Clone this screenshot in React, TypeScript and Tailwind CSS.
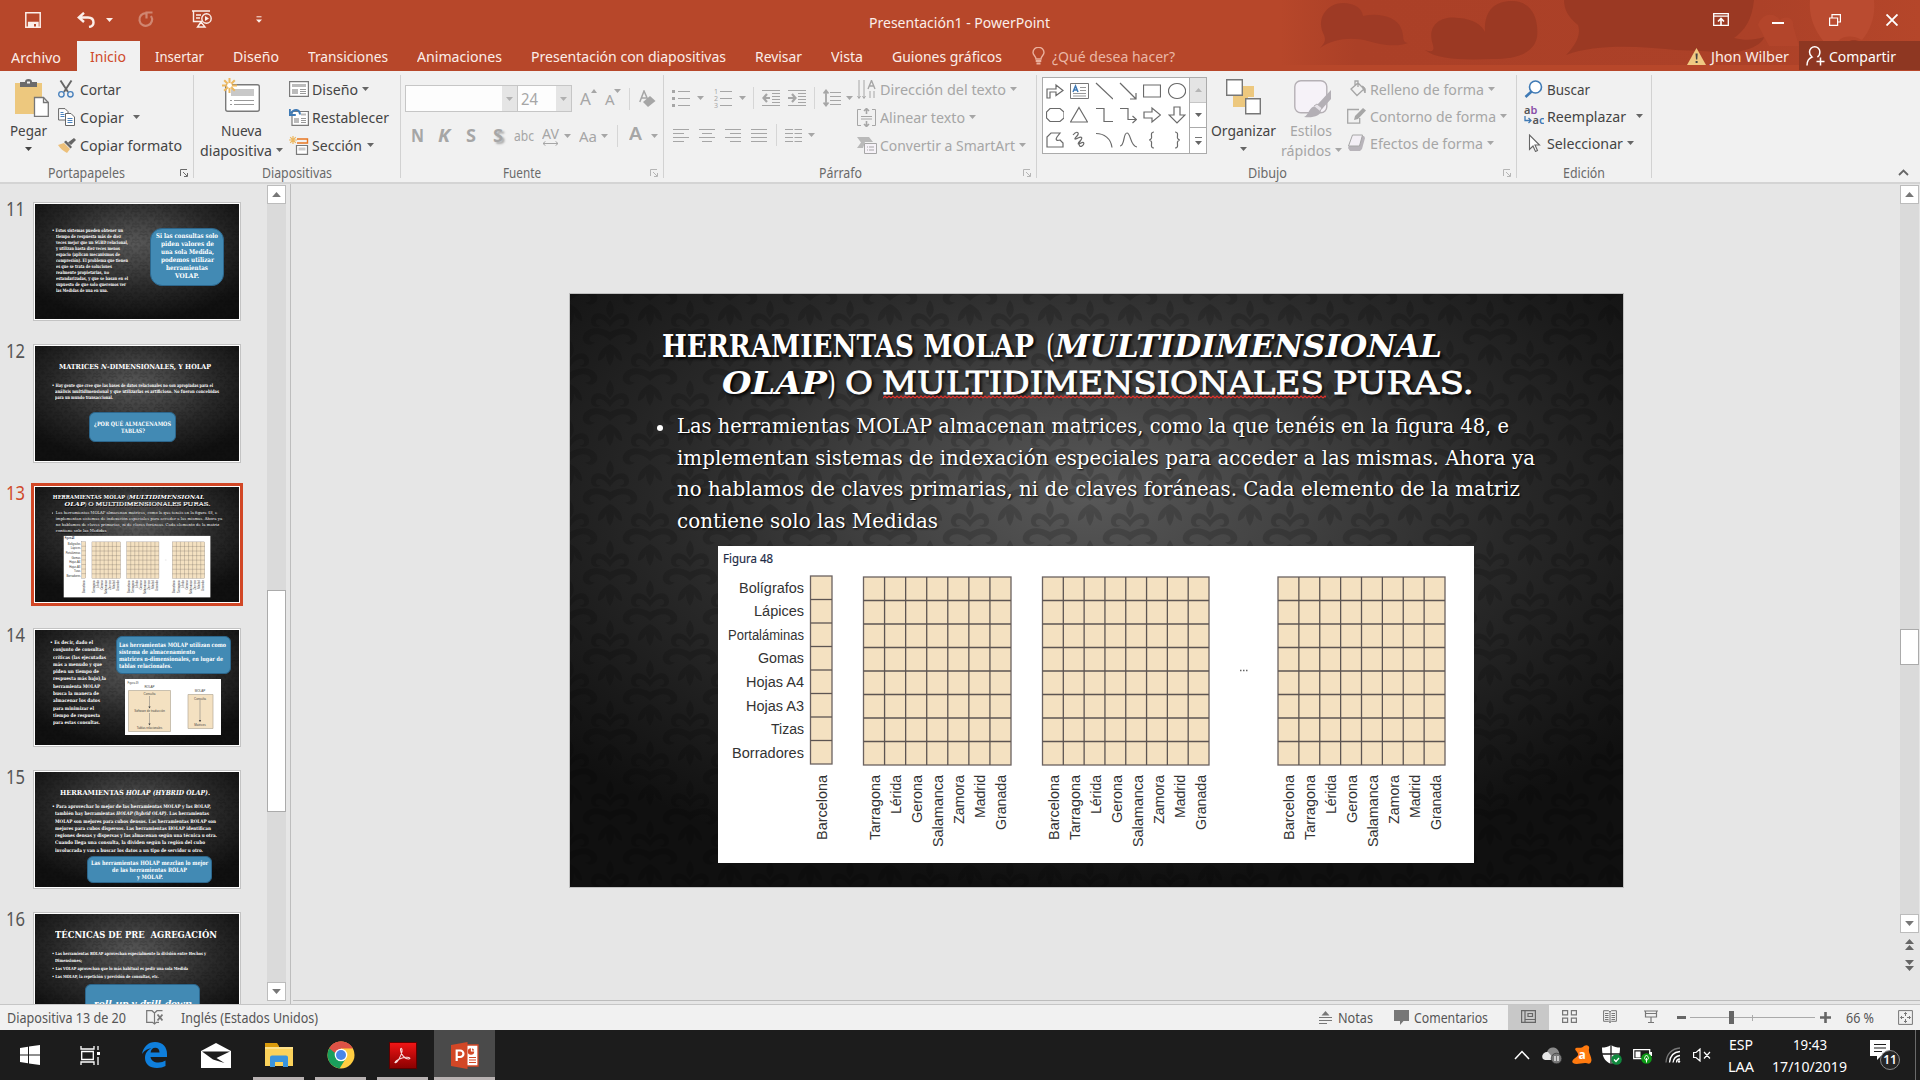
import React, { useLayoutEffect, useRef } from "react";

type Kids = { className?: string; children?: React.ReactNode };

/* Single line of text stretched or condensed to the width of its box. */
function Fit({ className = "", children }: Kids) {
  const outer = useRef<HTMLSpanElement>(null);
  const inner = useRef<HTMLSpanElement>(null);
  useLayoutEffect(() => {
    const o = outer.current;
    const i = inner.current;
    if (!o || !i) return;
    i.style.transform = "none";
    const ow = o.getBoundingClientRect().width;
    const iw = i.getBoundingClientRect().width;
    if (iw > 0) i.style.transform = `scaleX(${ow / iw})`;
  });
  return (
    <span ref={outer} className={`block shrink-0 ${className}`}>
      <span ref={inner} className="inline-block origin-left whitespace-pre">
        {children}
      </span>
    </span>
  );
}

function Svg({ className = "", vb, children }: Kids & { vb: string }) {
  return (
    <svg viewBox={vb} fill="none" stroke="currentColor" className={`block shrink-0 ${className}`}>
      {children}
    </svg>
  );
}

function Caret({ className = "" }: { className?: string }) {
  return (
    <svg viewBox="0 0 7 4" className={`block h-[4px] w-[7px] shrink-0 ${className}`}>
      <path d="M0 0h7L3.5 4z" fill="currentColor" />
    </svg>
  );
}

function Launcher({ className = "" }: { className?: string }) {
  return (
    <Svg vb="0 0 8 8" className={`h-[8px] w-[8px] ${className}`}>
      <path d="M.5 7V.5H7M3 3l4 4M7.500 4v3.500H4" />
    </Svg>
  );
}

const Sep = () => <div className="mt-[4px] h-[103px] w-px shrink-0 bg-[#d2d2d2]" />;

/* ------------------------------------------------------------------ Title bar */

function Header() {
  return (
    <header className="relative flex h-[71px] w-full shrink-0 flex-col overflow-hidden bg-[#b7472a] text-[15px] leading-[20px] text-[#fbeee9]">
      <svg viewBox="0 0 640 71" className="absolute top-0 right-0 h-[71px] w-[640px]">
        <defs>
          <linearGradient id="hd" x1="0" x2="1" y1="0" y2="0">
            <stop offset="0" stopColor="#b7472a" />
            <stop offset=".12" stopColor="#ab4027" />
            <stop offset=".75" stopColor="#ac4128" />
            <stop offset="1" stopColor="#b5462a" />
          </linearGradient>
        </defs>
        <path d="M0 0h640v65H0z" fill="url(#hd)" />
        <path d="M40 48c6-6 6-9 3-15C36 16 49 3 63 3c11 0 19 5 20 13 16-4 34 1 38 12 4 9 0 14 7 15-12 5-30 1-40-2-15-4-34-3-48 7z" fill="#9e3a25" />
        <path d="M145 50c9 3 9 0 8-5-7-20 8-30 26-27 14 1 23 7 26 14C204 11 214 1 232 1c21 0 27 20 25 36-3 17-22 22-45 22-26 1-55 1-67-9z" fill="#9b3923" />
        <path d="M284 0h190c-2 20-9 30-20 38 12 3 20 2 30-1-2 8-15 14-40 17-16-4-30-3-48-4-40-4-80-6-110 5 14-14 14-24 12-30-10-8-14-16-14-25z" fill="#9b3923" />
        <path d="M478 25c4-12 16-13 22-5 6-5 14-2 13 5l6 21h-30z" fill="#b3452b" />
        <path d="M530 0h64c2 18-5 32-12 40-14-8-28-2-28 12-14-12-26-30-24-52z" fill="#ba4b30" />
        <path d="M566 48c0-8 8-10 14-6l4 6z" fill="#9b3923" />
      </svg>

      <div className="relative flex h-[41px] items-center pb-[2px]">
        <Svg vb="0 0 16 16" className="ml-[25px] h-[16px] w-[16px]">
          <path d="M.8.8h14.400v14.400H.8z" strokeWidth="1.500" />
          <path d="M3 10h10v6h-2v-4H9v4H3zM0 9h16" fill="currentColor" stroke="none" />
          <path d="M3 10.500h10V15M3.600 10v5" strokeWidth="1.400" />
        </Svg>
        <Svg vb="0 0 18 16" className="ml-[36px] h-[16px] w-[18px]">
          <path d="M7 .8 1.800 5.500 7 10M2.500 5.500H11c4 0 5.500 2.500 5.500 5 0 2.200-1.500 4-4.500 4.500" strokeWidth="2.400" />
        </Svg>
        <Caret className="ml-[11px] h-[3px] w-[6px]" />
        <Svg vb="0 0 17 17" className="ml-[24px] h-[17px] w-[17px] text-[#d08671]">
          <path d="M9 2.200A6.300 6.300 0 1 0 14 5M9.500 7.500V1.500h6" strokeWidth="2.200" />
        </Svg>
        <Svg vb="0 0 20 19" className="ml-[38px] h-[19px] w-[20px]">
          <path d="M0 1h18M1.500 1.500v10H10M4 5h5M4 8h4M9 12l-3.500 5h7.500z" strokeWidth="1.400" />
          <circle cx="14.500" cy="8.500" r="4.700" strokeWidth="1.400" />
          <path d="m13 6 4 2.500-4 2.500z" fill="currentColor" stroke="none" />
        </Svg>
        <Svg vb="0 0 6 7" className="ml-[44px] h-[7px] w-[6px]">
          <path d="M.5.8h5" />
          <path d="M0 3.500h6L3 6.800z" fill="currentColor" stroke="none" />
        </Svg>
        <Fit className="mt-[4px] ml-[607px] w-[181px]">Presentación1 - PowerPoint</Fit>
        <div className="ml-[663px] flex items-center text-white">
          <Svg vb="0 0 16 13" className="h-[13px] w-[16px]">
            <path d="M.7.700h14.600v11.600H.7zM.7 3.200h14.600" strokeWidth="1.300" />
            <path d="M8 12V6M5 8.500 8 5.500l3 3" strokeWidth="1.600" />
          </Svg>
          <div className="mt-[6px] ml-[43px] h-[2px] w-[12px] bg-white" />
          <Svg vb="0 0 12 12" className="ml-[45px] h-[12px] w-[12px]">
            <path d="M.6 4h8v7.400h-8zM3 3.500V.6h8.400V8H9" strokeWidth="1.200" />
          </Svg>
          <Svg vb="0 0 12 12" className="ml-[45px] h-[12px] w-[12px]">
            <path d="m.5.500 11 11m0-11-11 11" strokeWidth="1.900" />
          </Svg>
        </div>
      </div>

      <nav className="relative flex h-[30px] items-center">
        <Fit className="mt-[2px] ml-[11px] w-[50px]">Archivo</Fit>
        <div className="ml-[16px] flex h-[30px] w-[63px] items-center bg-[#f1f1f1] pl-[13px] text-[#cf4a2a]">
          <Fit className="w-[36px]">Inicio</Fit>
        </div>
        <Fit className="ml-[15px] w-[49px]">Insertar</Fit>
        <Fit className="ml-[29px] w-[46px]">Diseño</Fit>
        <Fit className="ml-[29px] w-[80px]">Transiciones</Fit>
        <Fit className="ml-[29px] w-[85px]">Animaciones</Fit>
        <Fit className="ml-[29px] w-[195px]">Presentación con diapositivas</Fit>
        <Fit className="ml-[29px] w-[47px]">Revisar</Fit>
        <Fit className="ml-[29px] w-[32px]">Vista</Fit>
        <Fit className="ml-[29px] w-[110px]">Guiones gráficos</Fit>
        <Svg vb="0 0 13 18" className="ml-[30px] h-[18px] w-[13px] text-[#eab09d]">
          <path d="M4 12c0-3-3-3.500-3-6.500a5.500 5.200 0 0 1 11 0C12 8.500 9 9 9 12z" strokeWidth="1.400" />
          <path d="M3.700 14h5.600M4.500 16.500h4" strokeWidth="1.800" />
        </Svg>
        <Fit className="ml-[7px] w-[123px] text-[#eab7a6]">¿Qué desea hacer?</Fit>
        <svg viewBox="0 0 19 17" className="ml-[512px] block h-[17px] w-[19px] shrink-0">
          <path d="M9.500 0 19 17H0z" fill="#f0c982" />
          <path d="M8.500 5.500h2.200l-.4 6H9zM8.600 13h2v2h-2z" fill="#444" />
        </svg>
        <Fit className="ml-[5px] w-[78px]">Jhon Wilber</Fit>
        <div className="ml-[10px] flex h-[29px] w-[121px] items-center self-start bg-[#8e3722] pl-[7px] text-white">
          <Svg vb="0 0 19 20" className="h-[20px] w-[19px]">
            <path d="M1 19.500c0-5 2.500-7.500 5-8.500C4 9.500 3.500 7.500 3.500 6a5.200 5.200 0 0 1 10.400 0c0 2-.9 4-2.500 5M14.500 11.500v8M10.500 15.500h8" strokeWidth="1.500" />
          </Svg>
          <Fit className="ml-[4px] w-[67px]">Compartir</Fit>
        </div>
      </nav>
    </header>
  );
}

/* --------------------------------------------------------------------- Ribbon */

function Group({ className = "", children }: Kids) {
  return <section className={`flex h-[111px] shrink-0 flex-col ${className}`}>{children}</section>;
}
const GroupBody = ({ children }: Kids) => <div className="flex h-[92px]">{children}</div>;
const GroupLabel = ({ children }: Kids) => (
  <div className="flex h-[19px] items-center text-[14px] leading-[18px] text-[#6a6a6a]">{children}</div>
);
const Row = ({ className = "", children }: Kids) => <div className={`flex h-[28px] items-center ${className}`}>{children}</div>;

function Clipboard() {
  return (
    <Group className="w-[193px]">
      <GroupBody>
        <div className="flex w-[58px] flex-col pt-[8px]">
          <svg viewBox="0 0 34 38" className="ml-[15px] block h-[38px] w-[34px]">
            <path d="M0 4h27v31H0z" fill="#edc87e" />
            <path d="M5 3h5a3.500 3 0 0 1 7 0h5v5H5z" fill="#6b6b6b" />
            <path d="M12 2.500h3v2h-3z" fill="#f1f1f1" />
            <path d="M19.500 18.500h9l4.800 5v14H19.500z" fill="#fff" stroke="#777" strokeWidth="1.300" />
            <path d="M28.500 18.500v5h5" fill="none" stroke="#777" strokeWidth="1.300" />
          </svg>
          <Fit className="mt-[3px] ml-[10px] w-[37px]">Pegar</Fit>
          <Caret className="mt-[7px] ml-[25px]" />
        </div>
        <div className="pt-[4px]">
          <Row>
            <Svg vb="0 0 16 18" className="h-[18px] w-[16px]">
              <path d="M2.500.5 10 12M13.500.5 6 12" stroke="#666" strokeWidth="1.900" />
              <circle cx="3.400" cy="14.300" r="2.700" stroke="#4a82bd" strokeWidth="1.400" />
              <circle cx="12.400" cy="14.300" r="2.700" stroke="#4a82bd" strokeWidth="1.400" />
            </Svg>
            <Fit className="ml-[6px] w-[41px]">Cortar</Fit>
          </Row>
          <Row>
            <Svg vb="0 0 17 18" className="h-[18px] w-[17px]">
              <path d="M.6.600h6.400l3 3V12H.6z" fill="#fff" stroke="#666" />
              <path d="M7.500 5.500h5.500l3.500 3.500v8.500h-9z" fill="#fff" stroke="#666" />
              <path d="M2.500 4.500h3M2.500 6.500h4M2.500 8.500h4M9.500 10.500h5M9.500 12.500h5M9.500 14.500h5" stroke="#4a82bd" />
            </Svg>
            <Fit className="ml-[5px] w-[44px]">Copiar</Fit>
            <Caret className="ml-[9px] text-[#666]" />
          </Row>
          <Row>
            <svg viewBox="0 0 18 15" className="block h-[15px] w-[18px]">
              <path d="m0 7 6-2 6 6-3 4C5 13 2 10 0 7z" fill="#edc07a" />
              <path d="m6 4 2-1.500L14 9l-1.500 1.500zM10 4.500 16 0l2 2-5 5z" fill="#666" />
            </svg>
            <Fit className="ml-[4px] w-[102px]">Copiar formato</Fit>
          </Row>
        </div>
      </GroupBody>
      <GroupLabel>
        <Fit className="ml-[48px] w-[77px]">Portapapeles</Fit>
        <Launcher className="ml-[55px]" />
      </GroupLabel>
    </Group>
  );
}

function Slides() {
  return (
    <Group className="w-[206px]">
      <GroupBody>
        <div className="flex w-[95px] flex-col pt-[7px]">
          <svg viewBox="0 0 38 34" className="ml-[28px] block h-[34px] w-[38px]">
            <rect x="3.700" y="6.700" width="33.600" height="26.600" rx="2" fill="#fff" stroke="#7a7a7a" strokeWidth="1.400" />
            <path d="M9 11h23v7H9z" fill="#c8c8c8" />
            <path d="M8 22.500h2m2 0h20M8 26.500h2m2 0h20" stroke="#999" />
            <path d="M7.500 0v15M0 7.500h15M2.200 2.200l10.600 10.600M12.800 2.200 2.200 12.800" stroke="#edb85f" strokeWidth="2" />
            <circle cx="7.500" cy="7.500" r="2.400" fill="#fff" />
          </svg>
          <Fit className="mt-[8px] ml-[27px] w-[41px]">Nueva</Fit>
          <div className="flex items-center">
            <Fit className="ml-[6px] w-[72px]">diapositiva</Fit>
            <Caret className="ml-[4px] text-[#666]" />
          </div>
        </div>
        <div className="pt-[4px]">
          <Row>
            <Svg vb="0 0 20 16" className="h-[16px] w-[20px]">
              <path d="M.6.600h18.800v14.800H.6z" fill="#fff" stroke="#7a7a7a" strokeWidth="1.200" />
              <path d="M3 3h14v3H3zM3 8h6v5H3z" fill="#bbb" stroke="none" />
              <path d="M11 8.500h6M11 10.500h6M11 12.500h6" stroke="#999" />
            </Svg>
            <Fit className="ml-[3px] w-[46px]">Diseño</Fit>
            <Caret className="ml-[4px] text-[#666]" />
          </Row>
          <Row>
            <Svg vb="0 0 20 18" className="h-[18px] w-[20px]">
              <path d="M3 3.500h16.400v13.900H3z" fill="#fff" stroke="#7a7a7a" strokeWidth="1.200" />
              <path d="M12 5.500h5v2h-5zM5 10h5v5H5z" fill="#bbb" stroke="none" />
              <path d="M12 10.500h5M12 12.500h5M12 14.500h5" stroke="#999" />
              <path d="M2 5.500C5 .5 10.500 1 11 6.500M.8 1v6h6" stroke="#3f7ab5" strokeWidth="2" />
            </Svg>
            <Fit className="ml-[3px] w-[77px]">Restablecer</Fit>
          </Row>
          <Row>
            <Svg vb="0 0 20 19" className="h-[19px] w-[20px]">
              <path d="M8 3h10.500v4H8" stroke="#e87722" strokeWidth="1.400" />
              <path d="M7.500 9.500h11v8.900h-11z" fill="#fff" stroke="#7a7a7a" strokeWidth="1.200" />
              <path d="M9.500 11.500h7v3h-7z" fill="#ccc" stroke="none" />
              <path d="M4 0v8M0 4h8M1.200 1.200l5.600 5.600M6.800 1.200 1.200 6.800" stroke="#edb85f" strokeWidth="1.200" />
            </Svg>
            <Fit className="ml-[3px] w-[50px]">Sección</Fit>
            <Caret className="ml-[5px] text-[#666]" />
          </Row>
        </div>
      </GroupBody>
      <GroupLabel>
        <Fit className="ml-[68px] w-[70px]">Diapositivas</Fit>
      </GroupLabel>
    </Group>
  );
}

function FontGroup() {
  return (
    <Group className="w-[262px] text-[#a6a6a6]">
      <div className="flex h-[92px] flex-col">
        <div className="mt-[14px] flex h-[27px] items-center">
          <div className="ml-[4px] flex h-[27px] w-[113px] justify-end border border-[#c6c6c6] bg-[#fdfdfd]">
            <div className="flex w-[15px] items-center justify-center bg-[#e5e5e5]">
              <Caret className="text-[#b0b0b0]" />
            </div>
          </div>
          <div className="flex h-[27px] w-[54px] items-center justify-between border border-l-0 border-[#c6c6c6] bg-[#fdfdfd] pl-[3px]">
            <Fit className="w-[17px] text-[16px]">24</Fit>
            <div className="flex h-full w-[15px] items-center justify-center bg-[#e5e5e5]">
              <Caret className="text-[#b0b0b0]" />
            </div>
          </div>
          <span className="ml-[8px] text-[17px]">A</span>
          <Svg vb="0 0 6 4" className="mb-[16px] h-[4px] w-[6px]"><path d="M0 4 3 0l3 4z" fill="currentColor" stroke="none" /></Svg>
          <span className="ml-[8px] text-[15px]">A</span>
          <Caret className="mb-[15px] w-[6px]" />
          <div className="ml-[8px] h-[22px] w-px bg-[#d6d6d6]" />
          <Svg vb="0 0 17 18" className="ml-[9px] h-[18px] w-[17px]">
            <path d="M.8 12 5 1l4 9M2.500 8h5" strokeWidth="1.500" />
            <path d="m9 17-5-5 7-6 5.500 5z" fill="currentColor" stroke="none" />
          </Svg>
        </div>
        <div className="mt-[12px] flex h-[24px] items-center text-[17px] leading-[22px]">
          <Fit className="ml-[10px] w-[13px] font-bold">N</Fit>
          <Fit className="ml-[14px] w-[12px] font-bold italic">K</Fit>
          <Fit className="ml-[16px] w-[10px] font-bold underline underline-offset-2">S</Fit>
          <Fit className="ml-[17px] w-[10px] font-bold [text-shadow:2px_2px_2px_#aaa]">S</Fit>
          <Fit className="ml-[11px] w-[20px] text-[14px] line-through">abc</Fit>
          <div className="ml-[8px] flex flex-col">
            <Fit className="w-[17px] text-[14px] leading-[15px]">AV</Fit>
            <Svg vb="0 0 17 5" className="h-[5px] w-[17px]"><path d="M1 2.500h15M3.500.3 1 2.500l2.500 2.200M13.500.300 16 2.500l-2.500 2.200" /></Svg>
          </div>
          <Caret className="ml-[5px]" />
          <Fit className="ml-[8px] w-[18px] text-[15px]">Aa</Fit>
          <Caret className="ml-[4px]" />
          <div className="ml-[9px] h-[22px] w-px bg-[#d6d6d6]" />
          <Fit className="mb-[4px] ml-[11px] w-[13px] font-semibold">A</Fit>
          <Caret className="ml-[9px]" />
        </div>
      </div>
      <GroupLabel>
        <Fit className="ml-[102px] w-[38px]">Fuente</Fit>
        <Launcher className="ml-[109px] text-[#b5b5b5]" />
      </GroupLabel>
    </Group>
  );
}

function Paragraph() {
  return (
    <Group className="w-[372px] text-[#a6a6a6]">
      <GroupBody>
        <div className="flex w-[193px] flex-col">
          <div className="mt-[16px] flex h-[22px] items-center">
            <Svg vb="0 0 18 17" className="ml-[8px] h-[17px] w-[18px]">
              <path d="M0 1.500h3M0 8.500h3M0 15.500h3" strokeWidth="3" /><path d="M6 1.500h12M6 8.500h12M6 15.500h12" />
            </Svg>
            <Caret className="ml-[7px]" />
            <svg viewBox="0 0 18 20" className="ml-[10px] block h-[20px] w-[18px]">
              <path d="M6 3.500h12M6 10.500h12M6 17.500h12" stroke="currentColor" />
              <text x="0" y="6" fontSize="7" fill="currentColor">1</text>
              <text x="0" y="13" fontSize="7" fill="currentColor">2</text>
              <text x="0" y="20" fontSize="7" fill="currentColor">3</text>
            </svg>
            <Caret className="ml-[7px]" />
            <div className="ml-[7px] h-[22px] w-px bg-[#d6d6d6]" />
            <Svg vb="0 0 18 16" className="ml-[8px] h-[16px] w-[18px]">
              <path d="M0 .5h18M10 3.500h8M10 6.500h8M10 9.500h8M10 12.500h8M0 15.500h18" />
              <path d="M8 8H2M5 4 1.500 8 5 12" strokeWidth="2.200" />
            </Svg>
            <Svg vb="0 0 18 16" className="ml-[8px] h-[16px] w-[18px]">
              <path d="M0 .5h18M10 3.500h8M10 6.500h8M10 9.500h8M10 12.500h8M0 15.500h18" />
              <path d="M0 8h6M4 4l3.500 4L4 12" strokeWidth="2.200" />
            </Svg>
            <div className="ml-[8px] h-[22px] w-px bg-[#d6d6d6]" />
            <Svg vb="0 0 18 18" className="ml-[8px] h-[18px] w-[18px]">
              <path d="M7 3.500h11M7 7.500h11M7 11.500h11M7 15.500h11" />
              <path d="M3 1.500V17M.5 4.500 3 1.500l2.500 3M.5 13.500 3 16.500l2.500-3" strokeWidth="1.800" />
            </Svg>
            <Caret className="ml-[5px]" />
          </div>
          <div className="mt-[15px] flex h-[22px] items-center">
            <Svg vb="0 0 16 13" className="ml-[9px] h-[13px] w-[16px]"><path d="M0 .5h16M0 4.500h11M0 8.500h16M0 12.500h11" /></Svg>
            <Svg vb="0 0 16 13" className="ml-[10px] h-[13px] w-[16px]"><path d="M0 .5h16M3 4.500h10M0 8.500h16M3 12.500h10" /></Svg>
            <Svg vb="0 0 16 13" className="ml-[10px] h-[13px] w-[16px]"><path d="M0 .5h16M5 4.500h11M0 8.500h16M5 12.500h11" /></Svg>
            <Svg vb="0 0 16 13" className="ml-[10px] h-[13px] w-[16px]"><path d="M0 .5h16M0 4.500h16M0 8.500h16M0 12.500h16" /></Svg>
            <div className="ml-[9px] h-[22px] w-px bg-[#d6d6d6]" />
            <Svg vb="0 0 17 13" className="ml-[8px] h-[13px] w-[17px]"><path d="M0 .5h8M0 4.500h8M0 8.500h8M0 12.500h8M9.500.5h7.500M9.500 4.500h7.500M9.500 8.500h7.500M9.500 12.500h7.500" /></Svg>
            <Caret className="ml-[6px]" />
          </div>
        </div>
        <div className="pt-[4px]">
          <Row>
            <Svg vb="0 0 19 19" className="h-[19px] w-[19px]">
              <path d="M2 0v18M7 0v18M.500 16 2 18.500 3.500 16M5.500 16 7 18.500 8.500 16M13 11v7M17 11v7M11 0" />
              <path d="M11 9 14.500.500 18 9M12 6h5" strokeWidth="1.400" />
            </Svg>
            <Fit className="ml-[4px] w-[126px]">Dirección del texto</Fit>
            <Caret className="ml-[4px]" />
          </Row>
          <Row>
            <Svg vb="0 0 19 19" className="h-[19px] w-[19px]">
              <path d="M4 1.500H.5v16H4M15 1.500h3.500v16H15M4 8.500h11M4 11h11" />
              <path d="M9.500 0v6M9.500 13v6M7 3 9.500.500 12 3M7 16l2.500 2.500L12 16" strokeWidth="1.600" />
            </Svg>
            <Fit className="ml-[4px] w-[85px]">Alinear texto</Fit>
            <Caret className="ml-[4px]" />
          </Row>
          <Row>
            <Svg vb="0 0 20 17" className="h-[17px] w-[20px]">
              <path d="M0 0h12l4 5H8l-2 6H0l4-5.500z" fill="#b9b9b9" stroke="none" />
              <path d="M7.500 6.500h12v10h-12z" fill="#f6f2f8" /><path d="M10 10h1m1 0h5M10 13h1m1 0h5" />
            </Svg>
            <Fit className="ml-[3px] w-[135px]">Convertir a SmartArt</Fit>
            <Caret className="ml-[4px]" />
          </Row>
        </div>
      </GroupBody>
      <GroupLabel>
        <Fit className="ml-[155px] w-[43px]">Párrafo</Fit>
        <Launcher className="ml-[161px] text-[#b5b5b5]" />
      </GroupLabel>
    </Group>
  );
}

const shapePaths = [
  "M1 16V7h9V3l7 5.500-7 5V10H4v6z",
  "",
  "M1 1l17 16",
  "M1 1l16 16M17 11v6h-6",
  "M.5 3h17v12H.5z",
  "M9 1.500a8.500 7.500 0 1 0 .1 0z",
  "M4 2.500h10l4 3.500v6l-4 3.500H4L.500 12V6z",
  "M9 1.500 17.500 16H.5z",
  "M1 2.500h8v13h9",
  "M1 2.500h8v11h8M13.500 10l4 3.500-4 3.500",
  "M1 6h8V2l8.500 7L9 16v-4H1z",
  "M6 1h6v8h5l-8 8-8-8h5z",
  "M1 16V6l4-4h9l-3 4c-2 3 0 4 3 3l3 3v4z",
  "M3 4c4-5 7-2 4 1S4 9 8 7s5 0 2 3-2 4 1 2 4 1 1 3-4-3-1-6",
  "M1 2.500c8 0 15 5 16 14",
  "M1 15C6 15 4 2 8 2s3 13 10 14",
  "M11 1C7 1 9 5 8.500 7 8 8.500 7 9 6 9c1 0 2 .5 2.500 2 .5 2-1.500 6 2.500 6",
  "M7 1c4 0 2 4 2.500 6 .5 1.500 1.500 2 2.500 2-1 0-2 .5-2.500 2-.5 2 1.500 6-2.500 6",
];

function Drawing() {
  return (
    <Group className="w-[479px] text-[#a6a6a6]">
      <GroupBody>
        <div className="mt-[6px] ml-[5px] flex h-[77px] w-[165px] border border-[#ababab] bg-white">
          <div className="grid w-[146px] grid-cols-6 grid-rows-3 place-items-center py-px text-[#6a6a6a]">
            {shapePaths.map((d, i) =>
              i === 1 ? (
                <svg key={i} viewBox="0 0 19 16" className="block h-[16px] w-[19px]">
                  <path d="M.5.500h18v15H.5z" fill="#fff" stroke="#777" />
                  <path d="m3 9 2.500-6L8 9M4 7h3" fill="none" stroke="#3f7ab5" strokeWidth="1.500" />
                  <path d="M10 4.500h6M10 7.500h6M3 10.500h13M3 13h13" stroke="#999" />
                </svg>
              ) : (
                <Svg key={i} vb="0 0 18 18" className="h-[18px] w-[18px]">
                  <path d={d} strokeWidth="1.200" />
                </Svg>
              ),
            )}
          </div>
          <div className="flex w-[17px] flex-col border-l border-[#ababab]">
            <div className="flex h-[25px] items-center justify-center border-b border-[#c6c6c6] bg-[#e4e4e4]">
              <Caret className="w-[5px] rotate-180 text-[#b5b5b5]" />
            </div>
            <div className="flex h-[25px] items-center justify-center border-b border-[#ababab]">
              <Caret className="h-[3px] w-[5px] text-[#666]" />
            </div>
            <div className="flex h-[25px] flex-col items-center justify-center gap-[3px]">
              <div className="h-px w-[7px] bg-[#777]" />
              <Caret className="w-[6px] text-[#666]" />
            </div>
          </div>
        </div>
        <div className="flex w-[70px] flex-col pt-[8px] text-[#444]">
          <svg viewBox="0 0 35 36" className="ml-[19px] block h-[36px] w-[35px]">
            <path d="M17 7h11v11h-6v10H7V17h10z" fill="#edc87e" />
            <path d="M.7.700h15.600v15.600H.7zM19.700 19.700h14.600v15H19.700z" fill="#fff" stroke="#777" strokeWidth="1.400" />
          </svg>
          <Fit className="mt-[5px] ml-[4px] w-[65px]">Organizar</Fit>
          <Caret className="mt-[7px] ml-[33px] text-[#666]" />
        </div>
        <div className="flex w-[69px] flex-col pt-[9px]">
          <svg viewBox="0 0 38 38" className="ml-[17px] block h-[38px] w-[38px]">
            <rect x=".8" y=".8" width="32" height="32" rx="6" fill="#f6f2f8" stroke="#b5b0b5" strokeWidth="1.400" />
            <path d="M37 10v9L28 29l-5-4z" fill="#b3afb5" />
            <path d="m22 26 5 4c0 6-8 8-17 7 5-2 5-11 12-11z" fill="#b3afb5" />
            <path d="m20 26 3-2 5 4-2 3" fill="#e6e2e8" stroke="#b5b0b5" />
          </svg>
          <Fit className="mt-[2px] ml-[13px] w-[42px]">Estilos</Fit>
          <div className="flex items-center">
            <Fit className="ml-[4px] w-[50px]">rápidos</Fit>
            <Caret className="ml-[4px]" />
          </div>
        </div>
        <div className="pt-[4px] pl-px">
          <Row className="h-[27px]!">
            <Svg vb="0 0 19 17" className="h-[17px] w-[19px]">
              <path d="m4 9 7-6 6 6-7 6.500zM8 6V1h3v6" strokeWidth="1.300" /><path d="M15 6c3 1 4 3 3 7z" fill="currentColor" />
            </Svg>
            <Fit className="ml-[4px] w-[114px]">Relleno de forma</Fit>
            <Caret className="ml-[4px]" />
          </Row>
          <Row className="h-[27px]!">
            <Svg vb="0 0 19 16" className="h-[16px] w-[19px]">
              <path d="M12 1.500H.7v13.600h12V10" strokeWidth="1.300" /><path d="m7 12 1-4L16 0l3 2.500L11 11z" fill="currentColor" stroke="none" />
            </Svg>
            <Fit className="ml-[4px] w-[126px]">Contorno de forma</Fit>
            <Caret className="ml-[4px]" />
          </Row>
          <Row className="h-[27px]!">
            <Svg vb="0 0 19 17" className="h-[17px] w-[19px]">
              <path d="M6 2h11l1 2-3 11-2 2H3l-2-3z" fill="#b8b4ba" stroke="none" />
              <path d="M5.500 1h10l-3 11h-11z" fill="#f3eff5" strokeLinejoin="round" />
            </Svg>
            <Fit className="ml-[4px] w-[113px]">Efectos de forma</Fit>
            <Caret className="ml-[4px]" />
          </Row>
        </div>
      </GroupBody>
      <GroupLabel>
        <Fit className="ml-[211px] w-[39px]">Dibujo</Fit>
        <Launcher className="ml-[216px] text-[#b5b5b5]" />
      </GroupLabel>
    </Group>
  );
}

function Editing() {
  return (
    <Group className="w-[134px]">
      <div className="h-[92px] pt-[4px] pl-[7px]">
        <Row className="h-[27px]!">
          <Svg vb="0 0 19 18" className="h-[18px] w-[19px] text-[#3f7ab5]">
            <circle cx="11.500" cy="7" r="6" fill="#fff" strokeWidth="1.600" /><path d="M7.500 11.500 1.500 17" strokeWidth="2.600" />
          </Svg>
          <Fit className="ml-[4px] w-[43px]">Buscar</Fit>
        </Row>
        <Row className="h-[27px]!">
          <svg viewBox="0 0 20 19" className="block h-[19px] w-[20px]">
            <text x="0" y="8" fontSize="11" fontWeight="600" fill="#555">a<tspan fill="#8a4fa8">b</tspan></text>
            <text x="8.500" y="18" fontSize="11" fontWeight="600" fill="#555">a<tspan fill="#3f7ab5">c</tspan></text>
            <path d="M1 10v4.500h6M4.500 12 7 14.500 4.500 17" fill="none" stroke="#3f7ab5" strokeWidth="1.300" />
          </svg>
          <Fit className="ml-[3px] w-[79px]">Reemplazar</Fit>
          <Caret className="ml-[10px] text-[#666]" />
        </Row>
        <Row className="h-[27px]!">
          <Svg vb="0 0 19 18" className="h-[18px] w-[19px]">
            <path d="M5.500 1v14.500L9 12l2.500 5.500 2-1L11 11h4.500z" fill="#fff" stroke="#666" strokeWidth="1.100" />
          </Svg>
          <Fit className="ml-[4px] w-[76px]">Seleccionar</Fit>
          <Caret className="ml-[4px] text-[#666]" />
        </Row>
      </div>
      <GroupLabel>
        <Fit className="ml-[46px] w-[42px]">Edición</Fit>
      </GroupLabel>
    </Group>
  );
}

function Ribbon() {
  return (
    <div className="flex h-[113px] w-full shrink-0 border-b-2 border-[#d4d4d4] bg-[#f1f1f1] text-[15px] leading-[20px] text-[#444]">
      <Clipboard />
      <Sep />
      <Slides />
      <Sep />
      <FontGroup />
      <Sep />
      <Paragraph />
      <Sep />
      <Drawing />
      <Sep />
      <Editing />
      <Sep />
      <Svg vb="0 0 11 7" className="mt-[98px] ml-[246px] h-[7px] w-[11px] text-[#666]">
        <path d="m1 6 4.500-4.500L10 6" strokeWidth="1.800" />
      </Svg>
    </div>
  );
}

/* --------------------------------------------------------------------- Slides */

/* Dark vignette with a damask motif, shared by every slide. */
function Damask({ id, tile }: { id: string; tile: number }) {
  const motif =
    "M40 6c5 7 5 12 0 18-5-6-5-11 0-18zM40 26c8-10 18-8 19 0 1 6-6 9-10 5 3 1 6-1 5-4-2-4-9-2-14 6-5-8-12-10-14-6-1 3 2 5 5 4-4 4-11 1-10-5 1-8 11-10 19 0zM40 38c10-6 24-5 27 4 2 7-7 12-12 6 4 1 7-2 5-5-4-5-14-3-20 4-6-7-16-9-20-4-2 3 1 6 5 5-5 6-14 1-12-6 3-9 17-10 27-4zM40 50c7 3 13 10 12 17-4-1-7-4-8-8 0 5-1 9-4 13-3-4-4-8-4-13-1 4-4 7-8 8-1-7 5-14 12-17z";
  return (
    <svg className="absolute inset-0 h-full w-full">
      <defs>
        <radialGradient id={`${id}g`} cx=".49" cy=".34" r=".66">
          <stop offset="0" stopColor="#585858" />
          <stop offset=".3" stopColor="#424242" />
          <stop offset=".6" stopColor="#292929" />
          <stop offset=".85" stopColor="#191919" />
          <stop offset="1" stopColor="#101010" />
        </radialGradient>
        <pattern id={`${id}p`} width={tile} height={tile} viewBox="0 0 80 80" patternUnits="userSpaceOnUse">
          <path d={motif} fill="#000" opacity=".16" />
          <path d={motif} transform="translate(40 40)" fill="#000" opacity=".16" />
          <path d={motif} transform="translate(-40 40)" fill="#000" opacity=".16" />
          <path d={motif} transform="translate(40 -40)" fill="#000" opacity=".16" />
          <path d={motif} transform="translate(-40 -40)" fill="#000" opacity=".16" />
        </pattern>
      </defs>
      <rect width="100%" height="100%" fill={`url(#${id}g)`} />
      <rect width="100%" height="100%" fill={`url(#${id}p)`} />
    </svg>
  );
}

const products = [
  ["Bolígrafos", 65],
  ["Lápices", 50],
  ["Portaláminas", 76],
  ["Gomas", 46],
  ["Hojas A4", 58],
  ["Hojas A3", 58],
  ["Tizas", 33],
  ["Borradores", 72],
] as const;

const cities = [
  ["Barcelona", 65],
  ["Tarragona", 65],
  ["Lérida", 39],
  ["Gerona", 48],
  ["Salamanca", 72],
  ["Zamora", 49],
  ["Madrid", 43],
  ["Granada", 55],
] as const;

function Matrix({ x, y, cols, first, labelX, w }: { x: number; y: number; cols: number; first: number; labelX: number; w: number }) {
  const h = 188;
  const names = cities.slice(first, first + cols);
  return (
    <g>
      <rect x={x} y={y} width={w} height={h} fill="#f4e1c1" stroke="#6b6260" strokeWidth="1.300" />
      {Array.from({ length: cols - 1 }, (_, i) => (
        <path key={`c${i}`} d={`M${x + ((i + 1) * w) / cols} ${y}v${h}`} stroke="#5d5552" strokeWidth="1.300" />
      ))}
      {Array.from({ length: 7 }, (_, i) => (
        <path key={`r${i}`} d={`M${x} ${y + ((i + 1) * h) / 8}h${w}`} stroke="#5d5552" strokeWidth="1.300" />
      ))}
      {names.map(([name, len], i) => (
        <text
          key={name}
          transform={`translate(${labelX + i * 21 + 5.500} 229) rotate(-90)`}
          textAnchor="end"
          textLength={len}
          lengthAdjust="spacingAndGlyphs"
          fontSize="15.500"
          fill="#333"
        >
          {name}
        </text>
      ))}
    </g>
  );
}

function Figure() {
  return (
    <svg viewBox="0 0 756 317" className="absolute top-[252px] left-[148px] block h-[317px] w-[756px] bg-white font-['Liberation_Sans',sans-serif]">
      <text x="5" y="17" fontSize="13" textLength="50" lengthAdjust="spacingAndGlyphs" fill="#1d2b45" stroke="#1d2b45" strokeWidth=".2" className="font-['Noto_Sans',sans-serif]">
        Figura 48
      </text>
      {products.map(([name, len], i) => (
        <text key={name} x="86" y={46.500 + i * 23.600} fontSize="15.500" textAnchor="end" textLength={len} lengthAdjust="spacingAndGlyphs" fill="#333">
          {name}
        </text>
      ))}
      <Matrix x={92.500} y={30} w={21.500} cols={1} first={0} labelX={103} />
      <Matrix x={145.500} y={31} w={147.500} cols={7} first={1} labelX={156} />
      <Matrix x={324.500} y={31} w={166.500} cols={8} first={0} labelX={335} />
      <Matrix x={560} y={31} w={167} cols={8} first={0} labelX={570.500} />
      <path d="M522 124.500h8" stroke="#666" strokeWidth="1.500" strokeDasharray="1.500 1.500" />
    </svg>
  );
}

function MolapSlide({ id }: { id: string }) {
  return (
    <div className="relative h-[593px] w-[1053px] overflow-hidden bg-[#1a1a1a] font-['DejaVu_Serif',serif] text-white">
      <Damask id={id} tile={80} />
      <div className="absolute top-[32px] left-[92px] text-[31.500px] leading-[40px] [text-shadow:2px_2px_3px_#000]">
        <div className="flex h-[37px]">
          <Fit className="w-[372px] font-bold">HERRAMIENTAS MOLAP</Fit>
          <Fit className="ml-[12px] w-[9px]">(</Fit>
          <Fit className="w-[387px] font-semibold italic">MULTIDIMENSIONAL</Fit>
        </div>
        <div className="flex h-[37px] pl-[60px] font-semibold">
          <Fit className="w-[105px] italic">OLAP</Fit>
          <Fit className="w-[9px] font-normal">)</Fit>
          <Fit className="ml-[9px] w-[28px] font-normal [-webkit-text-stroke:0.8px_white]">O</Fit>
          <Fit className="ml-[9px] w-[442px] font-normal [-webkit-text-stroke:0.8px_white]">MULTIDIMENSIONALES</Fit>
          <Fit className="ml-[9px] w-[141px] font-normal [-webkit-text-stroke:0.8px_white]">PURAS.</Fit>
        </div>
      </div>
      <svg className="absolute top-[101px] left-[313px] h-[4px] w-[443px]">
        <defs>
          <pattern id={`${id}w`} width="4" height="4" patternUnits="userSpaceOnUse">
            <path d="M0 3 2 1l2 2" fill="none" stroke="#e8302a" strokeWidth="1.100" />
          </pattern>
        </defs>
        <rect width="443" height="4" fill={`url(#${id}w)`} />
      </svg>
      <div className="absolute top-[117px] left-[87px] flex text-[20.500px] leading-[31.600px] [text-shadow:1px_1px_2px_#000]">
        <div className="mt-[14px] h-[6px] w-[6px] rounded-full bg-white" />
        <div className="ml-[14px]">
          <Fit className="w-[832px]">Las herramientas MOLAP almacenan matrices, como la que tenéis en la figura 48, e</Fit>
          <Fit className="w-[858px]">implementan sistemas de indexación especiales para acceder a las mismas. Ahora ya</Fit>
          <Fit className="w-[843px]">no hablamos de claves primarias, ni de claves foráneas. Cada elemento de la matriz</Fit>
          <Fit className="w-[261px]">contiene solo las Medidas</Fit>
        </div>
      </div>
      <Figure />
    </div>
  );
}

function Bubble({ className = "", children }: Kids) {
  return (
    <div className={`absolute flex flex-col rounded-[6px] border border-[#2c668c] bg-[#428ab4] font-bold ${className}`}>{children}</div>
  );
}

function Thumb11() {
  return (
    <>
      <div className="absolute top-[24px] left-[17px] text-[4.600px] leading-[6px] font-bold">
        <Fit className="w-[71px]">• Estos sistemas pueden obtener un</Fit>
        <div className="pl-[4px]">
          <Fit className="w-[65px]">tiempo de respuesta más de diez</Fit>
          <Fit className="w-[72px]">veces mejor que un SGBD relacional,</Fit>
          <Fit className="w-[64px]">y utilizan hasta diez veces menos</Fit>
          <Fit className="w-[64px]">espacio (aplican mecanismos de</Fit>
          <Fit className="w-[72px]">compresión). El problema que tienen</Fit>
          <Fit className="w-[56px]">es que se trata de soluciones</Fit>
          <Fit className="w-[53px]">realmente propietarias, no</Fit>
          <Fit className="w-[72px]">estandarizadas, y que se basan en el</Fit>
          <Fit className="w-[70px]">supuesto de que solo queremos ver</Fit>
          <Fit className="w-[52px]">las Medidas de una en una.</Fit>
        </div>
      </div>
      <Bubble className="top-[24px] left-[115px] h-[58px] w-[74px] items-center rounded-[12px]! pt-[3px] text-[6.500px] leading-[8px]">
        <Fit className="w-[62px]">Si las consultas solo</Fit>
        <Fit className="w-[53px]">piden valores de</Fit>
        <Fit className="w-[53px]">una sola Medida,</Fit>
        <Fit className="w-[53px]">podemos utilizar</Fit>
        <Fit className="w-[42px]">herramientas</Fit>
        <Fit className="w-[24px]">VOLAP.</Fit>
      </Bubble>
    </>
  );
}

function Thumb12() {
  return (
    <>
      <div className="absolute top-[15px] left-[24px] flex text-[7px] leading-[11px] font-bold">
        <Fit className="w-[42px]">MATRICES </Fit>
        <Fit className="w-[6px] italic">N</Fit>
        <Fit className="w-[104px]">-DIMENSIONALES, Y HOLAP</Fit>
      </div>
      <div className="absolute top-[37px] left-[17px] text-[4.600px] leading-[6px] font-bold">
        <Fit className="w-[161px]">• Hay gente que cree que las bases de datos relacionales no son apropiadas para el</Fit>
        <Fit className="ml-[3px] w-[164px]">análisis multidimensional y que utilizarlas es artificioso. No fueron concebidas</Fit>
        <Fit className="ml-[3px] w-[58px]">para un mundo transaccional.</Fit>
      </div>
      <Bubble className="top-[66px] left-[54px] h-[30px] w-[87px] items-center pt-[7px] text-[6px] leading-[7px]">
        <Fit className="w-[77px]">¿POR QUÉ ALMACENAMOS</Fit>
        <Fit className="w-[24px]">TABLAS?</Fit>
      </Bubble>
    </>
  );
}

function Thumb14() {
  return (
    <>
      <div className="absolute top-[9px] left-[15px] text-[4.800px] leading-[7.300px] font-bold">
        <Fit className="w-[43px]">• Es decir, dado el</Fit>
        <div className="pl-[3px]">
          <Fit className="w-[51px]">conjunto de consultas</Fit>
          <Fit className="w-[53px]">críticas (las ejecutadas</Fit>
          <Fit className="w-[49px]">más a menudo y que</Fit>
          <Fit className="w-[46px]">piden un tiempo de</Fit>
          <Fit className="w-[53px]">respuesta más bajo),la</Fit>
          <Fit className="w-[47px]">herramienta MOLAP</Fit>
          <Fit className="w-[46px]">busca la manera de</Fit>
          <Fit className="w-[47px]">almacenar los datos</Fit>
          <Fit className="w-[41px]">para minimizar el</Fit>
          <Fit className="w-[47px]">tiempo de respuesta</Fit>
          <Fit className="w-[47px]">para estas consultas.</Fit>
        </div>
      </div>
      <Bubble className="top-[6px] left-[81px] h-[38px] w-[115px] pt-[4px] pl-[2px] text-[6px] leading-[7px]">
        <Fit className="w-[107px]">Las herramientas MOLAP utilizan como</Fit>
        <Fit className="w-[76px]">sistema de almacenamiento</Fit>
        <Fit className="w-[104px]">matrices n-dimensionales, en lugar de</Fit>
        <Fit className="w-[53px]">tablas relacionales.</Fit>
      </Bubble>
      <svg viewBox="0 0 96 56" className="absolute top-[49px] left-[90px] h-[56px] w-[96px] bg-white font-['Liberation_Sans',sans-serif]">
        <path d="M3.500 11.500h42v41h-42zM63 15.500h25v34H63z" fill="#f4e1c1" stroke="#b5aa9a" strokeWidth=".7" />
        <path d="M24.500 17v12M24.500 34v12M75 21v22" stroke="#777" strokeWidth=".5" />
        <path d="m23.300 27.500 1.200 2 1.200-2zM23.300 44.500l1.200 2 1.200-2zM73.800 41l1.200 2 1.200-2z" fill="#444" />
        <g fontSize="3" fill="#444" textAnchor="middle">
          <text x="8" y="4.500" fontSize="2.600">Figura 49</text>
          <text x="24.500" y="8.500">ROLAP</text>
          <text x="75" y="12.500">MOLAP</text>
          <text x="24.500" y="16">Consulta</text>
          <text x="24.500" y="32.500">Software de traducción</text>
          <text x="24.500" y="49.500">Tablas relacionales</text>
          <text x="75" y="20.500">Consulta</text>
          <text x="75" y="46.500">Matrices</text>
        </g>
      </svg>
    </>
  );
}

function Thumb15() {
  return (
    <>
      <div className="absolute top-[15px] left-[25px] flex text-[7px] leading-[11px] font-bold">
        <Fit className="w-[66px]">HERRAMIENTAS </Fit>
        <Fit className="w-[84px] italic">HOLAP (HYBRID OLAP).</Fit>
      </div>
      <div className="absolute top-[31px] left-[17px] text-[4.800px] leading-[7.300px] font-bold">
        <Fit className="w-[159px]">• Para aprovechar lo mejor de las herramientas MOLAP y las ROLAP,</Fit>
        <div className="pl-[3px]">
          <Fit className="w-[154px]">también hay herramientas <i>HOLAP (hybrid OLAP)</i>. Las herramientas</Fit>
          <Fit className="w-[161px]">MOLAP son mejores para cubos densos. Las herramientas ROLAP son</Fit>
          <Fit className="w-[156px]">mejores para cubos dispersos. Las herramientas HOLAP identifican</Fit>
          <Fit className="w-[162px]">regiones densas y dispersas y las almacenan según una técnica u otra.</Fit>
          <Fit className="w-[150px]">Cuando llega una consulta, la dividen según la región del cubo</Fit>
          <Fit className="w-[148px]">involucrada y van a buscar los datos a un tipo de servidor u otro.</Fit>
        </div>
      </div>
      <Bubble className="top-[84px] left-[52px] h-[27px] w-[125px] items-center pt-[2px] text-[6px] leading-[7px]">
        <Fit className="w-[117px]">Las herramientas HOLAP mezclan lo mejor</Fit>
        <Fit className="w-[75px]">de las herramientas ROLAP</Fit>
        <Fit className="w-[26px]">y MOLAP.</Fit>
      </Bubble>
    </>
  );
}

function Thumb16() {
  return (
    <>
      <div className="absolute top-[14px] left-[20px] text-[9px] leading-[14px] font-bold">
        <Fit className="w-[162px]">TÉCNICAS DE PRE  AGREGACIÓN</Fit>
      </div>
      <div className="absolute top-[36px] left-[17px] text-[4.300px] leading-[7px] font-bold">
        <Fit className="w-[154px]">• Las herramientas ROLAP aprovechan especialmente la división entre Hechos y</Fit>
        <Fit className="ml-[3px] w-[27px]">Dimensiones;</Fit>
        <Fit className="mt-px w-[136px]">• Las VOLAP aprovechan que lo más habitual es pedir una sola Medida</Fit>
        <Fit className="mt-px w-[107px]">• Las MOLAP, la repetición y previsión de consultas, etc.</Fit>
      </div>
      <Bubble className="top-[70px] left-[50px] h-[50px] w-[115px] items-center pt-[11px] text-[11px] leading-[14px]">
        <Fit className="w-[98px] font-['Liberation_Serif',serif] italic">roll-up y drill-down</Fit>
      </Bubble>
    </>
  );
}

function ThumbItem({ n, children }: { n: number; children: React.ReactNode }) {
  const active = n === 13;
  return (
    <div className="flex h-[142px] shrink-0 pl-[6px]">
      <Fit className={`-mt-[6px] w-[19px] text-[19px] leading-[26px] ${active ? "text-[#d04a2b]" : "text-[#555]"}`}>{n}</Fit>
      <div
        className={
          active
            ? "-mt-[3px] ml-[6px] h-[123px] w-[212px] border-[3px] border-[#d24726] bg-white p-px"
            : "ml-[8px] h-[119px] w-[208px] border border-[#c3c3c3] bg-white p-px"
        }
      >
        <div className="relative h-full w-full overflow-hidden bg-[#1a1a1a] font-['DejaVu_Serif',serif] text-white">{children}</div>
      </div>
    </div>
  );
}

const plain = [
  [11, Thumb11],
  [12, Thumb12],
  [14, Thumb14],
  [15, Thumb15],
  [16, Thumb16],
] as const;

function ThumbPanel() {
  const items = plain.map(([n, Body]) => (
    <ThumbItem key={n} n={n}>
      <Damask id={`t${n}`} tile={15.500} />
      <Body />
    </ThumbItem>
  ));
  items.splice(
    2,
    0,
    <ThumbItem key={13} n={13}>
      <div className="origin-top-left scale-[0.194]">
        <MolapSlide id="t13" />
      </div>
    </ThumbItem>,
  );
  return <div className="flex h-full w-[267px] shrink-0 flex-col overflow-hidden pt-[18px]">{items}</div>;
}

function ArrowBox({ up }: { up?: boolean }) {
  return (
    <div className="flex h-[19px] w-full shrink-0 items-center justify-center border border-[#bcbcbc] bg-white text-[#777]">
      <Caret className={up ? "h-[5px] w-[9px] rotate-180" : "h-[5px] w-[9px]"} />
    </div>
  );
}

function Workspace() {
  return (
    <div className="flex h-[820px] w-full shrink-0 overflow-hidden bg-[#e6e6e6]">
      <ThumbPanel />
      <div className="mt-px flex h-[816px] w-[19px] shrink-0 flex-col bg-[#dadada]">
        <ArrowBox up />
        <div className="mt-[386px] h-[222px] w-full border border-[#ababab] bg-white" />
        <div className="flex-1" />
        <ArrowBox />
      </div>
      <div className="ml-[4px] h-full w-px shrink-0 bg-[#bdbdbd]" />
      <div className="ml-[2px] flex h-[817px] min-w-0 flex-1 border-b border-[#bdbdbd]">
        <div className="flex-1 pt-[109px] pl-[276px]">
          <div className="h-[595px] w-[1055px] border border-[#bfbfbf]">
            <MolapSlide id="main" />
          </div>
        </div>
        <div className="mt-px mr-px flex w-[19px] shrink-0 flex-col">
          <div className="flex h-[748px] flex-col bg-[#dadada]">
            <ArrowBox up />
            <div className="mt-[425px] h-[36px] border border-[#ababab] bg-white" />
            <div className="flex-1" />
            <ArrowBox />
          </div>
          <Svg vb="0 0 9 11" className="mt-[6px] ml-[5px] h-[11px] w-[9px] text-[#666]">
            <path d="M0 5 4.500 0 9 5zM0 11l4.500-5L9 11z" fill="currentColor" stroke="none" />
          </Svg>
          <Svg vb="0 0 9 11" className="mt-[10px] ml-[5px] h-[11px] w-[9px] text-[#666]">
            <path d="M0 0h9L4.500 5zM0 6h9l-4.500 5z" fill="currentColor" stroke="none" />
          </Svg>
        </div>
      </div>
    </div>
  );
}

/* ----------------------------------------------------------------- Status bar */

function StatusBar() {
  return (
    <footer className="flex h-[26px] w-full shrink-0 items-center border-t border-[#c6c6c6] bg-[#f1f1f1] text-[14px] leading-[20px] text-[#555]">
      <Fit className="ml-[7px] w-[119px]">Diapositiva 13 de 20</Fit>
      <Svg vb="0 0 17 15" className="ml-[20px] h-[15px] w-[17px] text-[#777]">
        <path d="M8.500 13.500V3L6 .7H.7v11.600h5.800l2 1.700 2-1.700H13M8.500 3 11 .7h5.500" strokeWidth="1.200" />
        <path d="m11.500 4.500 5 6m0-6-5 6" strokeWidth="1.800" />
      </Svg>
      <Fit className="ml-[18px] w-[137px]">Inglés (Estados Unidos)</Fit>
      <Svg vb="0 0 13 13" className="ml-[1001px] h-[13px] w-[13px] text-[#777]">
        <path d="M0 6.500h13M0 9.500h13M0 12.500h8" strokeWidth="1.200" /><path d="M2.500 4.500 6.500 0l4 4.500z" fill="currentColor" stroke="none" />
      </Svg>
      <Fit className="ml-[6px] w-[35px]">Notas</Fit>
      <Svg vb="0 0 15 15" className="ml-[21px] h-[15px] w-[15px] text-[#777]">
        <path d="M0 0h15v11H9.500L6 15v-4H0z" fill="currentColor" stroke="none" />
      </Svg>
      <Fit className="ml-[5px] w-[74px]">Comentarios</Fit>
      <div className="ml-[20px] flex h-[25px] w-[41px] items-center justify-center bg-[#c8c8c8] pb-[2px] text-[#666]">
        <Svg vb="0 0 15 13" className="h-[13px] w-[15px]"><path d="M.6.600h13.800v11.800H.6zM4 .6v11.800M4 9.500h10M7 3.500h4.500v3H7z" strokeWidth="1.200" /></Svg>
      </div>
      <Svg vb="0 0 15 13" className="mb-[2px] ml-[13px] h-[13px] w-[15px] text-[#777]"><path d="M.6.600h5v4.200h-5zM9.400.600h5v4.200h-5zM.6 8.200h5v4.200h-5zM9.400 8.200h5v4.200h-5z" strokeWidth="1.200" /></Svg>
      <Svg vb="0 0 14 13" className="mb-[2px] ml-[26px] h-[13px] w-[14px] text-[#777]"><path d="M7 2v11M7 2 5.500.7H.6v10.600h5L7 12.500l1.400-1.200h5V.7h-5zM2 3.500h3.500M2 5.500h3.500M2 7.500h3.500M2 9.500h3.500M8.500 3.500H12M8.500 5.500H12M8.500 7.500H12M8.500 9.500H12" /></Svg>
      <Svg vb="0 0 14 13" className="mb-[2px] ml-[27px] h-[13px] w-[14px] text-[#777]"><path d="M0 1h14M1.500 1v6h11V1M7 7v5M4 12.500h6M1.500 3.500h11" strokeWidth="1.200" /></Svg>
      <div className="ml-[19px] h-[3px] w-[9px] bg-[#666]" />
      <div className="ml-[4px] flex h-[12px] w-[125px] items-center">
        <div className="h-px w-[39px] bg-[#aaa]" />
        <div className="h-[13px] w-[5px] shrink-0 bg-[#666]" />
        <div className="h-px w-[18px] bg-[#aaa]" />
        <div className="h-[6px] w-px bg-[#aaa]" />
        <div className="h-px w-[62px] bg-[#aaa]" />
      </div>
      <Svg vb="0 0 11 11" className="ml-[5px] h-[11px] w-[11px] text-[#666]"><path d="M0 5.500h11M5.500 0v11" strokeWidth="2.600" /></Svg>
      <Fit className="ml-[15px] w-[28px]">66 %</Fit>
      <Svg vb="0 0 15 15" className="ml-[24px] h-[15px] w-[15px] text-[#777]">
        <path d="M.6.600h13.800v13.800H.6zM7.500 2.500v3.500M7.500 9v3.500M2.500 7.500H6M9 7.500h3.500M6 4l1.500-1.500L9 4M6 11l1.500 1.500L9 11M4 6 2.500 7.500 4 9M11 6l1.500 1.500L11 9" />
      </Svg>
    </footer>
  );
}

/* -------------------------------------------------------------------- Taskbar */

function TaskButton({ className = "", children }: Kids) {
  return (
    <div className={`flex h-[50px] shrink-0 flex-col items-center ${className}`}>
      <div className="flex h-[47px] items-center justify-center pt-[3px]">{children}</div>
      <div className="h-[3px] w-full bg-[#b8b2b2]" />
    </div>
  );
}

function Taskbar() {
  return (
    <div className="flex h-[50px] w-full shrink-0 items-center bg-[#1c1c1c] text-[15px] leading-[22px] text-white">
      <svg viewBox="0 0 20 20" className="ml-[20px] block h-[20px] w-[20px]">
        <path d="m0 3 8-1.200v7.700H0zM9 1.600 20 0v9.500H9zM0 10.500h8v7.700L0 17zM9 10.500h11V20L9 18.400z" fill="#fff" />
      </svg>
      <Svg vb="0 0 20 19" className="ml-[40px] h-[19px] w-[20px]">
        <path d="M1 0v3h13V0M1 19v-3h13v3M1.700 5.500h11.600v8H1.700zM18 0v4M18 11v8" strokeWidth="1.300" />
        <path d="M17 6h3v3h-3z" fill="#fff" stroke="none" />
      </Svg>
      <svg viewBox="0 0 25 26" className="ml-[42px] block h-[26px] w-[25px]">
        <path d="M0 12C1.500 4.500 6.500 0 13 0c8 0 12 5.500 12 12v3H8.500c.5 3.500 3.500 5.500 8 5.500 2.800 0 5-.7 7-2v5.500c-2.300 1.300-5 2-8.500 2C7.500 26 3 22 3 16c0-4.500 2.500-8 6.500-9.700C6 6.500 2.500 8.500 0 12zm8.600-1.500h8.900c0-3-1.500-4.800-4.200-4.800s-4.300 1.900-4.700 4.800z" fill="#0f7fdc" />
      </svg>
      <svg viewBox="0 0 30 25" className="ml-[34px] block h-[25px] w-[30px]">
        <path d="M15 0 30 8v17H0V8z" fill="#fff" />
        <path d="M1 8.500h28L15.500 15l8 5-11.500-3.500z" fill="#1c1c1c" />
      </svg>
      <TaskButton className="ml-[22px] w-[51px]">
        <svg viewBox="0 0 28 24" className="block h-[24px] w-[28px]">
          <path d="M0 0h12l2 3v5H0z" fill="#d99a0b" /><path d="M0 4h28v19H0z" fill="#fbd25b" /><path d="M0 4h28v2H0z" fill="#fde08a" />
          <path d="M5 14.500a2 2 0 0 1 2-2h14a2 2 0 0 1 2 2V24h-5v-5h-8v5H5z" fill="#3a94de" />
        </svg>
      </TaskButton>
      <TaskButton className="ml-[11px] w-[51px]">
        <svg viewBox="0 0 28 28" className="block h-[28px] w-[28px]">
          <circle cx="14" cy="14" r="13.500" fill="#ffcd41" />
          <path d="M14 14 2.300 7.300A13.500 13.500 0 0 1 25.700 7.300H14z" fill="#de5246" />
          <path d="M2.300 7.300A13.500 13.500 0 0 0 12.600 27.400L18.500 18 14 14z" fill="#1a9f5c" />
          <path d="M2.300 7.300 8.500 17.500 14 14V7.500z" fill="#1a9f5c" />
          <path d="M2.300 7.300A13.500 13.500 0 0 1 25.700 7.300H14L8 12z" fill="#de5246" />
          <circle cx="14" cy="14" r="6.300" fill="#fff" /><circle cx="14" cy="14" r="5" fill="#4a86e8" />
        </svg>
      </TaskButton>
      <TaskButton className="ml-[11px] w-[51px]">
        <div className="flex h-[27px] w-[28px] items-center justify-center border border-[#5c0000] bg-linear-to-b from-[#f01515] to-[#8b0202]">
          <Svg vb="0 0 17 17" className="h-[17px] w-[17px] text-[#f8dcdc]">
            <path d="M1 15.500c2 1 6-6 7-11 .5-3.500-1.500-4-1.500-1.500C7 7 10 11.500 14.500 12c2.500 0 1.500-2-2-1.800C8 10.500 2 13 1 15.500z" strokeWidth="1.100" />
          </Svg>
        </div>
      </TaskButton>
      <TaskButton className="ml-[6px] w-[61px] bg-[#4a4a4a]">
        <svg viewBox="0 0 28 27" className="block h-[27px] w-[28px]">
          <path d="M15 3h12v21H15z" fill="#fff" stroke="#d24726" strokeWidth="1.300" />
          <circle cx="20" cy="9.500" r="3.200" fill="#d24726" /><path d="M20.500 5v4h4" stroke="#fff" strokeWidth="1.200" fill="none" />
          <path d="M18 15.500h7M18 18h7M18 20.500h7" stroke="#d24726" strokeWidth="1.200" />
          <path d="M0 3 16.500 0v27L0 24z" fill="#d24726" />
          <path d="M5.700 19V8.500h3.500a3.200 3.200 0 0 1 0 6.500H6" fill="none" stroke="#fff" strokeWidth="2.200" />
        </svg>
      </TaskButton>

      <Svg vb="0 0 16 10" className="ml-[1019px] h-[10px] w-[16px]"><path d="m1 9 7-7.500L15 9" strokeWidth="1.500" /></Svg>
      <svg viewBox="0 0 20 17" className="ml-[12px] block h-[17px] w-[20px]">
        <path d="M1 12C-1 8 2 5 5 5c1-4 6-6 10-3 3 3 3 8 2 11z" fill="#8b8b8b" /><path d="M1 12C-1 8 2 5 6 5l7 8H3z" fill="#e8e8e8" />
        <circle cx="14.500" cy="11.500" r="5.300" fill="#777" stroke="#222" strokeWidth=".6" /><path d="M13 9v5M16 9v5" stroke="#fff" strokeWidth="1.200" />
      </svg>
      <svg viewBox="0 0 20 20" className="ml-[10px] block h-[20px] w-[20px]">
        <path d="M12 1c3-2 6 0 5 3-1 4 4 9 2 13-1 3-4 1-6 1-4 0-9 2-12 0-3-3 4-5 5-8S1 5 4 3c2-1 5 1 8-2z" fill="#ff7a0f" />
        <text x="10" y="14" fontSize="12" fontWeight="700" textAnchor="middle" fill="#fff">a</text>
      </svg>
      <svg viewBox="0 0 20 20" className="ml-[10px] block h-[20px] w-[20px]">
        <path d="M9 0c3 2 6 2.500 9 2.500C18 11 16 16 9 19 2 16 0 11 0 2.500 3 2.500 6 2 9 0z" fill="#fff" />
        <path d="M9 0v19M0 9h18" stroke="#1c1c1c" strokeWidth="1.300" />
        <circle cx="14.500" cy="14.500" r="5.300" fill="#10893e" /><path d="m12 14.500 2 2 3-3.500" fill="none" stroke="#fff" strokeWidth="1.200" />
      </svg>
      <svg viewBox="0 0 20 17" className="ml-[11px] block h-[17px] w-[20px]">
        <path d="M.7 2.700h16v9H.7z" fill="none" stroke="#fff" strokeWidth="1.300" /><path d="M2.500 4.500h5v6h-5zM17 5h2v4h-2z" fill="#fff" />
        <circle cx="13.500" cy="11.500" r="5.300" fill="#0d9a16" /><path d="M13.500 8c2.500 2.500 2.500 4 0 5.500-2.500-1.500-2.500-3 0-5.500zm0 3v4.500" fill="none" stroke="#fff" />
      </svg>
      <Svg vb="0 0 16 16" className="ml-[12px] h-[16px] w-[16px]">
        <path d="M1 15.500C1.500 7 7 1.500 15 1" stroke="#777" strokeWidth="1.300" /><path d="M4.500 15.500C5 9 9 5 15 4.500M8 15.500c.5-4 3-6.500 7-7M11.500 15.500c0-2 1.500-3.500 3.500-3.500" strokeWidth="1.300" />
        <circle cx="14" cy="14.500" r="1.200" fill="#fff" stroke="none" />
      </Svg>
      <Svg vb="0 0 18 14" className="ml-[12px] h-[14px] w-[18px]"><path d="M.6 4.500h2.500L7 1v12L3 9.500H.6zM11 4l6 6.500M17 4l-6 6.500" strokeWidth="1.200" /></Svg>
      <div className="ml-[17px] flex flex-col">
        <Fit className="ml-px w-[24px]">ESP</Fit>
        <Fit className="w-[26px]">LAA</Fit>
      </div>
      <div className="ml-[18px] flex flex-col items-center pb-px">
        <Fit className="w-[34px]">19:43</Fit>
        <Fit className="w-[75px]">17/10/2019</Fit>
      </div>
      <div className="relative ml-[23px] h-[30px] w-[31px]">
        <svg viewBox="0 0 20 20" className="block h-[20px] w-[20px]">
          <path d="M0 0h20v16H11l-4 4v-4H0z" fill="#fff" /><path d="M4 4.500h12M4 8h12M4 11.500h8" stroke="#1c1c1c" strokeWidth="1.200" />
        </svg>
        <div className="absolute top-[10px] left-[10px] flex h-[20px] w-[20px] items-center justify-center rounded-full border border-[#8a8a8a] bg-[#262626] text-[12px] leading-none font-semibold">
          11
        </div>
      </div>
      <div className="ml-[14px] h-full w-px bg-[#6a6a6a]" />
    </div>
  );
}

export default function App() {
  return (
    <div className="flex h-[1080px] w-[1920px] flex-col overflow-hidden bg-[#e6e6e6] font-['Noto_Sans','Open_Sans',sans-serif]">
      <Header />
      <Ribbon />
      <Workspace />
      <StatusBar />
      <Taskbar />
    </div>
  );
}
